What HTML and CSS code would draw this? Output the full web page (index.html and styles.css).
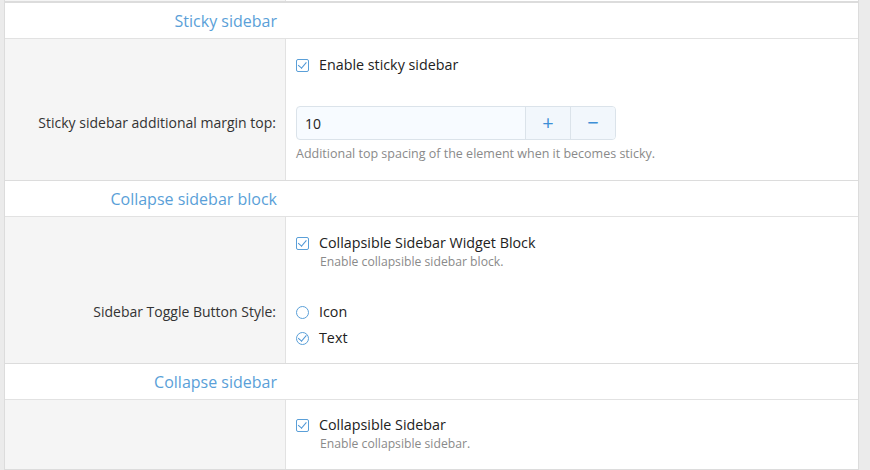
FILE: index.html
```html
<!DOCTYPE html>
<html lang="en">
<head>
  <meta charset="UTF-8" />
  <title>Sidebar settings</title>
  <link rel="stylesheet" href="styles.css">
</head>
<body>
  <div class="panel">
    <div class="row prev">
      <div class="label"></div>
      <div class="field"></div>
    </div>

    <!-- Sticky sidebar -->
    <div class="section-title"><span>Sticky sidebar</span></div>
    <div class="row first">
      <div class="label"></div>
      <div class="field">
        <label class="check"><span class="box checked"></span>Enable sticky sidebar</label>
      </div>
    </div>
    <div class="row last tall">
      <div class="label"><span class="label-text input-align">Sticky sidebar additional margin top:</span></div>
      <div class="field">
        <div class="spinner">
          <input type="text" value="10" />
          <button class="spin-btn">+</button>
          <button class="spin-btn">&minus;</button>
        </div>
        <p class="help">Additional top spacing of the element when it becomes sticky.</p>
      </div>
    </div>

    <!-- Collapse sidebar block -->
    <div class="section-title"><span>Collapse sidebar block</span></div>
    <div class="row first">
      <div class="label"></div>
      <div class="field">
        <label class="check"><span class="box checked"></span>Collapsible Sidebar Widget Block</label>
        <p class="desc">Enable collapsible sidebar block.</p>
      </div>
    </div>
    <div class="row last">
      <div class="label"><span class="label-text">Sidebar Toggle Button Style:</span></div>
      <div class="field radios">
        <label class="check"><span class="circle"></span>Icon</label>
        <label class="check"><span class="circle checked"></span>Text</label>
      </div>
    </div>

    <!-- Collapse sidebar -->
    <div class="section-title"><span>Collapse sidebar</span></div>
    <div class="row single">
      <div class="label"></div>
      <div class="field">
        <label class="check"><span class="box checked"></span>Collapsible Sidebar</label>
        <p class="desc">Enable collapsible sidebar.</p>
      </div>
    </div>
  </div>
</body>
</html>
```

FILE: styles.css
```css
body {
  margin: 0;
  background-color: #ebebeb;
  font-family: 'Open Sans', 'Noto Sans', sans-serif;
  font-size: 14px;
  color: #333;
}

.panel {
  margin-left: 4px;
  width: 853px;
  background-color: #fff;
  border-left: 1px solid #dcdcdc;
  border-right: 1px solid #dcdcdc;
  border-bottom: 1px solid #dcdcdc;
}

.row {
  display: grid;
  grid-template-columns: 281px 1fr;
}

.row .label {
  background-color: #f5f5f5;
  border-right: 1px solid #e2e2e2;
  text-align: right;
  padding-right: 9px;
}

.row .field {
  padding-left: 10px;
}

.row.prev {
  height: 1px;
  border-bottom: 1px solid #dcdcdc;
}

.section-title {
  height: 35px;
  border-bottom: 1px solid #e2e2e2;
  display: flex;
  align-items: center;
}

.section-title span {
  width: 272px;
  text-align: right;
  font-size: 16px;
  color: #5a9fd8;
}

.row + .section-title {
  border-top: 1px solid #dcdcdc;
}

.row.first .field {
  padding-top: 16px;
  padding-bottom: 16px;
}

.row.last .field {
  padding-top: 15px;
  padding-bottom: 15px;
}

.row.last.tall .field {
  padding-bottom: 18px;
}

.row.last .label {
  padding-top: 15px;
}

.row.single .field {
  padding-top: 15px;
  padding-bottom: 16px;
}

.label-text {
  display: block;
  line-height: 20px;
}

.label-text.input-align {
  line-height: 34px;
}

.check {
  display: flex;
  align-items: center;
  line-height: 20px;
  font-size: 14.3px;
  color: #222;
}

.box,
.circle {
  width: 11px;
  height: 11px;
  border: 1.5px solid #5a9fd8;
  margin-right: 10px;
  position: relative;
  flex-shrink: 0;
}

.box {
  border-radius: 2px;
}

.circle {
  border-radius: 50%;
}

.box.checked::after,
.circle.checked::after {
  content: "";
  position: absolute;
  left: 3px;
  top: 0.5px;
  width: 3.5px;
  height: 6.5px;
  border-right: 1.6px solid #4a93d4;
  border-bottom: 1.6px solid #4a93d4;
  transform: rotate(40deg);
}

.desc {
  margin: 0 0 0 24px;
  line-height: 18px;
  font-size: 12.2px;
  color: #8a8a8a;
}

.radios {
  display: flex;
  flex-direction: column;
  gap: 6px;
}

.spinner {
  display: flex;
  width: 318px;
  height: 32px;
  border: 1px solid #dbe3ea;
  border-radius: 4px;
  background-color: #f7fbff;
  overflow: hidden;
}

.spinner input {
  flex: 1;
  min-width: 0;
  border: none;
  background: transparent;
  padding: 0 8px;
  font-family: inherit;
  font-size: 14px;
  color: #222;
}

.spin-btn {
  width: 45px;
  border: none;
  border-left: 1px solid #dbe3ea;
  background-color: #f2f7fc;
  color: #3d8fd6;
  font-family: inherit;
  font-size: 20px;
  line-height: 1;
  padding: 0;
}

.help {
  margin: 6px 0 0;
  line-height: 16px;
  font-size: 12.5px;
  color: #8a8a8a;
}
```
